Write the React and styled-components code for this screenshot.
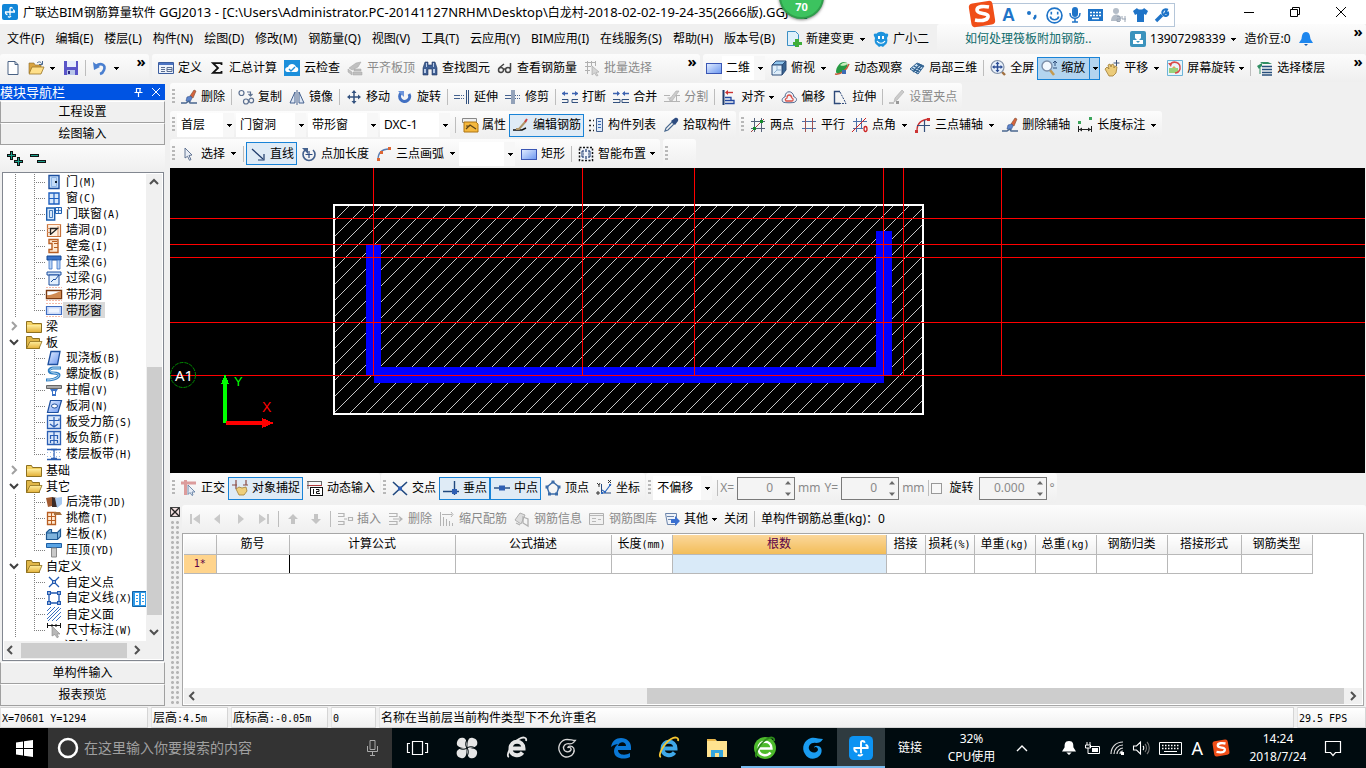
import React, { useState } from 'react';
import styled, { createGlobalStyle, css } from 'styled-components';

const ui = '"Noto Sans", "Noto Sans CJK SC", sans-serif';

const GlobalStyle = createGlobalStyle`
  * { box-sizing: border-box; }
  body { margin: 0; background: #f0f0f0; overflow: hidden; }
  body, button, input, select { font-family: ${ui}; font-size: 12px; line-height: 16px; color: #000; }
  button { background: none; border: 0; padding: 0; margin: 0; white-space: nowrap; }
  ul { list-style: none; margin: 0; padding: 0; }
`;

/* ---------- icons ---------- */

const navy = '#33517e';
const gray = '#b4b4b4';
const S = (d, stroke = navy, w = 1, more = {}) => <path d={d} fill="none" stroke={stroke} strokeWidth={w} {...more} />;
const F = (d, fill = navy, more = {}) => <path d={d} fill={fill} {...more} />;

const icons = {
  doc: <>{F('M3 1.500h7l3 3v10H3z', '#fff', { stroke: '#4a6284' })}{S('M10 1.500v3h3', '#4a6284')}</>,
  open: <>{F('M1 3h5l1 2h6v8H1z', '#d9a441', { stroke: '#8a6a28', strokeWidth: .6 })}{F('M4 7h12l-3 7H1z', '#ffe08a', { stroke: '#9a7526', strokeWidth: .8 })}{S('M9 3c2-2 4-1 5 1M14.500 1v3.500H11', '#49688f')}</>,
  save: <>{F('M1 1h14v14H1z', '#5a55c8')}{F('M4 1h9v6H4z', '#e8eefc')}{F('M4 10h8v5H4z', '#b9c6ea')}{F('M5 11h2v3H5z', '#2c2a80')}</>,
  undo: <>{S('M4 6c5-4 10-1 8 4-1 3-4 4-4 4', '#4a7fd0', 2.6)}{F('M1 2l1 8 6-3z', '#4a7fd0')}</>,
  define: <>{F('M.5 2.500h15v11H.5z', '#eef3fb', { stroke: '#3c5ea0' })}{F('M1 3h14v2H1z', '#4d74c2')}{S('M3 7.500h4M3 9.500h4M3 11.500h4M9 7.500h5v4H9zM9 9.500h5', '#5a6d90')}</>,
  sigma: <>{S('M12.500 5V3.200H4L9 8l-5 4.800h8.500V11', '#111', 1.8)}</>,
  cloud: <>{F('M0 0h16v16H0z', '#1c8fdb')}{F('M3 12c-3-1-2-5 1-5 1-4 7-4 8 0 3 0 3 5 0 5z', '#fff')}{S('M5 9l2 2 4-4', '#1c8fdb', 1.4)}</>,
  flush: <>{F('M2 8l7-5 5-1-3 5-6 3zM1 9l4 3v3l-4-3zM6 12h9v3H6zM7 9h7v2H7z', '#c0c0c0', { stroke: '#a5a5a5', strokeWidth: .5 })}</>,
  bino: <>{F('M3 2h3v3h4V2h3l2 6v7h-5V9H6v6H1V8z', '#3f5f93', { stroke: '#22385f', strokeWidth: .6 })}{F('M2 9h2v4H2zM11 9h2v4h-2zM4 3h1v4H4zM11 3h1v4h-1z', '#b8cbe8')}</>,
  glasses: <>{S('M1.500 10a2.500 2.500 0 1 0 5 0a2.500 2.500 0 1 0-5 0M8.500 10a2.500 2.500 0 1 0 5 0a2.500 2.500 0 1 0-5 0M6.500 9h2M2 8l5-4M13.500 9V3', '#444', 1.5)}</>,
  batch: <>{S('M1 2.500h11M1 6.500h6M1 10.500h5M3.500 1v13M7.500 1v5M11.500 1v5', '#b0b0b0')}{F('M8 6l7 6-3 .5 2 3-1.500.5-2-3L8 15z', '#d5d5d5', { stroke: '#aaa', strokeWidth: .7 })}</>,
  rect: <rect x=".5" y="3.500" width="15" height="10" fill="url(#blueSheet)" stroke="#3a56b4" />,
  cube: <>{F('M1 5l4-4h10l-4 4z', '#8fc4ec', { stroke: '#2c4d78' })}{F('M11 5l4-4v9l-4 5z', '#376391', { stroke: '#2c4d78' })}{F('M1 5h10v10H1z', '#dfeefa', { stroke: '#2c4d78' })}{S('M3 13l3-3V6M6 10h4', '#8fb2d2')}</>,
  orbit: <>{F('M2 12c0-5 4-10 8-10 5 0 4 5 1 8-3 4-8 5-9 2z', '#279a42')}{F('M6 5c3-3 6-3 7-2 1 2-4 4-7 2z', '#c8eebc')}{S('M1 14c5 1 12-4 14-10', '#c65a3a', 1.5)}{F('M8 10h4v4H8z', '#3c6cb4')}</>,
  local: <>{F('M1 9l7-6 7 3-6 8z', '#cfe3f5', { stroke: '#2f6190' })}{S('M3 8l7 4M5 6l7 4M8 4l6 3M4 12l7-8M7 13l6-8', '#2f6190', 1.3)}</>,
  zoomfull: <>{S('M12 12l3 3', '#a07040', 2.4)}<circle cx="7.500" cy="7" r="6.500" fill="#e9f2fc" stroke="#8492a8" strokeWidth="1.200" />{S('M7.500 3v8M3.500 7h8', '#2d4d94', 1.5)}{F('M7.500 1.500l2 2.500h-4zM7.500 12.500l2-2.500h-4zM2 7l2.500-2v4zM13 7l-2.500-2v4z', '#2d4d94')}</>,
  zoom: <>{S('M9 10l4 5', '#c49a50', 2.6)}<circle cx="6" cy="6" r="5" fill="#f2f8fe" stroke="#7c8fa9" strokeWidth="1.400" />{S('M14 1v5M12 3l2-2 2 2M12 8h4', '#31507c')}</>,
  pan: <>{F('M1 9l2-2 2 2-1-4 2-1 1 3 1-3 2 1 0 3 1-2 2 1-1 6-3 3H5z', '#ebcb7a', { stroke: '#a17c34', strokeWidth: .8 })}{S('M12.500 0v6M9.500 3h6', '#3c5277')}</>,
  rotscreen: <>{F('M.5.5h15v15H.5z', '#e8f4fb', { stroke: '#6db4d8' })}{F('M2 8h9v5H2z', '#9ad27b')}{F('M5 8l2-2 2 2z', '#e8a05a')}{S('M3 5c3-5 11-3 10 4-1 3-3 4-5 4', '#d94848', 1.5)}{F('M1 3l4 0-1 4z', '#d94848')}</>,
  floors: <>{F('M3 2h8l4 2H6z', '#2f8d62')}{S('M5 6.500h10M5 9.500h10M5 12.500h10M5 15h10', '#274f7c', 1.3)}{F('M0 6l5-3v3l-3 3z', '#2f8d62')}{S('M3 8v6', '#2f8d62')}</>,

  brush: <>{F('M9 7l4-6 2 1-3 7z', '#d5633c', { stroke: '#7c4a30', strokeWidth: .6 })}{F('M6 8l4-1 1 2-2 4-4-1z', '#5c84cc', { stroke: '#334f88', strokeWidth: .6 })}{S('M0 14h5l3-2 1 2h7', '#49678f', 1.4)}</>,
  copy: <>{S('M1 4a2.500 2.500 0 1 0 5 0a2.500 2.500 0 1 0-5 0M5.500 12.500a2.500 2.500 0 1 0 5 0a2.500 2.500 0 1 0-5 0M11 11.500a2.300 2.300 0 1 0 4.600 0a2.300 2.300 0 1 0-4.600 0M9 3h3.500v4M10.500 5l2 2 2-2', '#5b6f8f', 1.2)}</>,
  mirror: <>{F('M1 14l5-11v11z', '#dfe8f5', { stroke: '#44618e' })}{S('M8 1v15', '#44618e', 1)}{F('M15 14L10 3v11z', '#dfe8f5', { stroke: '#44618e' })}</>,
  move: <>{S('M8 3v10M3 8h10', navy, 1.5)}{F('M8 1l2.500 3h-5zM8 15l2.500-3h-5zM1 8l3-2.500v5zM15 8l-3-2.500v5z')}</>,
  rotate: <>{S('M4 4a5 5 0 1 0 8 1', '#4270c2', 3)}{F('M1 2h6v6z', '#6d95dc')}</>,
  extend: <>{S('M0 6.500h6M0 9.500h6', '#44618e')}{S('M7 6.500h4M7 9.500h4', '#44618e', 1, { strokeDasharray: '1 1' })}{S('M12.500 1v14M14.500 1v14', navy)}</>,
  trim: <>{S('M0 6.500h6M0 9.500h6', '#44618e')}{S('M10 6.500h6M10 9.500h6', '#44618e', 1, { strokeDasharray: '1 1' })}{S('M7 1v14M9 1v14', navy)}</>,
  brk: <>{S('M0 4.500h6M10 4.500h6', '#3d63b0', 1.3)}{F('M0 4.500L3 2v5zM16 4.500L13 2v5z', '#3d63b0')}{S('M0 10.500h6v3H0M16 10.500h-6v3h6', navy)}</>,
  merge: <>{S('M0 4.500h6M10 4.500h6', '#3d63b0', 1.3)}{F('M7 4.500L4 2v5zM9 4.500L12 2v5z', '#3d63b0')}{S('M0 10.500h7v3H0M16 10.500H9v3h7', navy)}</>,
  split: <>{S('M0 6.500h6M10 6.500h6M0 12.500h16M12.500 6v6M3.500 9h4', gray)}{F('M5 11l7-9 3 0-7 10z', '#ccc', { stroke: '#aaa', strokeWidth: .6 })}</>,
  align: <>{S('M2.500 1v15', '#203d6c', 2)}{F('M4 3.500l3-2.500v5z', '#c33')}{S('M6 3.500h6', '#c33', 1.4)}{S('M4 8.500h6v3H4M4 11.500h9v3H4', '#2348a0', 1.3)}</>,
  offset: <>{F('M2 13c-2-2 0-5 2-5 0-7 8-7 9 0 2 0 4 3 1 5-1 1-11 1-12 0z', '#f3f3f8', { stroke: '#50688e' })}{S('M5 12c-2-2 1-3 1-3 0-4 4-4 5 0 2 1 1 3 0 3z', '#d9534a', 1.3)}</>,
  stretch: <>{S('M8 14.500H2.500v-12H8', '#2e4a7a', 1.4)}{S('M8 3l6 11.500H8', '#2e4a7a', 1, { strokeDasharray: '2 1' })}</>,
  gripset: <>{S('M0 14h5', '#aaa', 1.4)}{F('M5 13l1-4 7-8 2 2-7 8z', '#ccc', { stroke: '#aaa', strokeWidth: .6 })}{F('M7 12h3v3H7z', '#999')}</>,

  props: <>{F('M.5 1.500h14v4H.5z', '#efefef', { stroke: '#888' })}{F('M2 5h12l2 2v8H2z', '#f5b83d', { stroke: '#ad7514' })}{S('M4 12l4-4 6 4M4 9h4', '#5c431a', 1.2)}</>,
  editbar: <>{S('M0 13h9l4-2', '#111', 1.4)}{S('M3 12h3l7-8', '#b0966a', 2)}{S('M12 5l2-3', '#c44', 2)}</>,
  complist: <>{F('M8.500 1.500h6v13h-6z', '#dce8f8', { stroke: '#44618e' })}{S('M10 4.500h3M10 7.500h3M10 10.500h3', '#3566b0')}{S('M1 3.500h2M1 8.500h2M1 13.500h2M5 3.500h1M5 8.500h1M5 13.500h1', '#222', 1.6)}</>,
  picker: <>{S('M2 14l1-3 6-6 2 2-6 6z', '#49698f', 1.2)}{F('M8 4l4-3c2-1 4 1 3 3l-3 4z', '#2e4c80')}</>,
  twopt: <>{S('M1 4.500h14M1 11.500h14M4.500 1v14M11.500 1v14', '#55617a')}{S('M1 15L14 2', '#a04040', 1)}{F('M10 3h3v3h-3zM3 10h3v3H3z', '#178a2c')}</>,
  parallel: <>{S('M1 4.500h14M1 11.500h14', '#4a6fa8')}{S('M4.500 1v14M11.500 1v14', '#a05050')}</>,
  angle: <>{S('M1 4.500h14M1 11.500h10M4.500 1v14M9.500 1v10', '#4a6fa8')}{S('M0 15L14 1', '#c22')}{S('M12 12a1.500 2.500 0 1 0 3 0a1.500 2.500 0 1 0-3 0', '#c22', 1.3)}</>,
  arcaxis: <>{S('M2 14c0-8 4-11 12-12', '#c33', 1.4)}{S('M2 8.500h13M9.500 3v12', '#35507c', 1.2)}{F('M0 13h3v3H0zM12 1h3v3h-3z', '#c33')}</>,
  dim: <>{F('M1 4h3v3H1zM12 0h3v3h-3z', '#3aa45a')}{S('M1.500 9v6M14.500 9v6M2 12.500h12', '#222')}{F('M2 12.500l3-2v4zM14 12.500l-3-2v4z', '#222')}</>,

  cursor: <>{F('M4 2l7 7-3 .5 2 4-1.500.8-2-4L4 12z', '#e8edf5', { stroke: '#55698a', strokeWidth: .9 })}</>,
  line: <>{S('M2 3l11 10', '#1d3a6a', 1.2)}{S('M14 8v6H8', '#1d3a6a', 1.2)}</>,
  ptlen: <>{S('M4 4a6 6 0 1 0 8 0', '#44618e', 1.6)}{S('M8 5v7M4.500 8.500h7', '#2c4a80', 1.2)}{F('M1 2h6v6z', '#44618e')}</>,
  arc3: <>{S('M2 14c0-7 4-11 11-11', '#5a7bb0', 1.3)}{F('M1 12h3v3H1zM4 5h3v3H4zM12 1h3v3h-3z', '#dd6633')}</>,
  smart: <><rect x="1.500" y="1.500" width="13" height="13" fill="#f2f5fa" stroke="#111" strokeWidth="1.500" strokeDasharray="2 1.500" />{S('M8 3v3M8 10v3M3 8h3M10 8h3M5 4v2h-2M11 4v2h2M5 12v-2h-2M11 12v-2h2', '#1b3a70', 1.2)}</>,

  ortho: <>{S('M0 3h15M4.500 0v15', '#dc9c9c', 3)}{F('M7 5l7 7-3 0 1 3-1 .5-2-3-2 2z', '#e6ecf5', { stroke: '#55759c', strokeWidth: .8 })}</>,
  snap: <>{S('M0 5h5M11 5h5M4 0v9M14 0v5', '#8a4a42', 1.2)}{F('M4 9l3-2 3 1 4-1 1 4-3 4H7z', '#efcf7c', { stroke: '#a17c34', strokeWidth: .8 })}</>,
  dyn: <>{S('M0 5.500h15', '#b23b3b')}{S('M1 1v8M14.500 1v4M0 1.500h15', '#666')}<rect x="3.500" y="7.500" width="12" height="8" fill="#fff" stroke="#111" />{S('M6.500 9v5M9 9.500h3v2H9.500v2H13', '#111')}</>,
  cross: <>{S('M1 2l14 13M15 2L1 15', '#20487e', 1.6)}{F('M6 6.500h4v4H6z', '#2f5fb4')}</>,
  perp: <>{S('M0 11.500h16M11.500 1v14', '#20487e', 1.4)}{F('M9 9h5v5H9z', '#2f5fb4')}</>,
  mid: <>{S('M0 8h16', '#20487e', 1.4)}{F('M5 5.500h6v5H5z', '#2f5fb4')}</>,
  vertex: <>{S('M8 2l6 5-2.500 7h-7L2 7z', '#3c6ca8', 1.4)}{F('M6.500.5h3v3h-3zM12.500 5.500h3v3h-3zM.5 5.500h3v3h-3zM3 12.500h3v3H3zM10 12.500h3v3h-3z', '#3c6ca8')}</>,
  coord: <>{S('M5.500 4v9H15', '#2a4d80')}{S('M6 10l3 2 6-8', '#2e69c0', 1.2)}{S('M1 3l2 2 1-2M3 5v2M12 0l3 3M15 0l-3 3M1 12h2v2H1z', '#333')}{F('M5 12h2v2H5zM13 4h2v2h-2zM8 11h2v2H8z', '#2e69c0')}</>,

  first: <>{F('M3 3h2v10H3zM13 3v10L6 8z', '#c9c9c9')}</>,
  prev: F('M10 3v10L4 8z', '#c9c9c9'),
  next: F('M5 3v10l6-5z', '#c9c9c9'),
  last: <>{F('M11 3h2v10h-2zM3 3v10l7-5z', '#c9c9c9')}</>,
  up: F('M8 3l5 5h-3v5H6V8H3z', '#c4c4c4'),
  down: F('M8 13l5-5h-3V3H6v5H3z', '#c4c4c4'),
  insert: <>{S('M1 2.500h6v3H1M1 10.500h6v3H1M7 8h3M11.500 6.500h4v3h-4z', gray, 1.2)}</>,
  del: <>{S('M1 2.500h8v3H1M1 10.500h8v3H1M5 8h9M11 5.500L14 8l-3 2.500', gray, 1.2)}</>,
  scale: <>{S('M3 3.500h10M1.500 1v14M4.500 6v9M7.500 8v7M10.500 10v5M13.500 12v3', gray, 1)}{S('M12 1l2 2.500L12 6', gray)}</>,
  info: <>{F('M1 9l5-7 5 2-4 9z', '#ddd', { stroke: '#b0b0b0' })}{S('M9 6l5 2v7l-5-3zM2 12l4 2', '#b0b0b0', 1.3)}</>,
  lib: <>{F('M.5 2.500h14v11H.5z', '#f1f1f1', { stroke: '#b0b0b0' })}{S('M1 4.500h13M3 7.500h4M3 10.500h4M9 8.500h3', '#b8b8b8')}</>,
  other: <>{F('M1.500 2.500h11v11h-9z', '#eef3fa', { stroke: '#6b84ab' })}{S('M3 5.500h7M4 8.500h5', '#6b84ab')}{F('M7 8h4V5l5 5-5 5v-3H7z', '#3a6fd0')}</>,

  door: <>{F('M3 1.500h10v13H3z', '#c4dcf8', { stroke: '#1d4f9e', strokeWidth: 1.4 })}{S('M5.500 3.500h5v9h-5z', '#8fb6e6')}{F('M9 7h2v2H9z', '#123')}</>,
  window: <>{F('M3 3h10v11H3z', '#d7e8fb', { stroke: '#1d5fc0', strokeWidth: 1.4 })}{S('M8 3v11M3 8.500h10', '#1d5fc0', 1.2)}</>,
  doorwin: <>{F('M.7 2h8v12h-8z', '#d7e8fb', { stroke: '#1d5fb0', strokeWidth: 1.4 })}{F('M9.500 1.500h6v6h-6z', '#e4f0fd', { stroke: '#1d5fb0' })}{S('M12.500 1.500v6M9.500 4.500h6M3.500 4.500h3v7h-3z', '#1d5fb0', .8)}</>,
  hole: <>{F('M1.500 2.500h13v12h-13z', '#fff1e2', { stroke: '#c4703a', strokeWidth: 1.2 })}{S('M1 6.500h3M1 10.500h3M12 4v10M1 2.500h14', '#d98c5a')}{S('M4.500 13V6.500h7L5 12', '#222', 1.3)}</>,
  niche: <>{F('M3 1.500h9v13H3v-3h3v-6H3z', '#ffe9d0', { stroke: '#b85e22', strokeWidth: 1.4 })}{S('M8 5.500h4M8 9.500h4M6 3.500h5', '#b85e22')}</>,
  linkbeam: <>{F('M1 2h14v4H1z', '#3b73c8', { stroke: '#174a94' })}{F('M3 6h3v9H3zM11 6h3v9h-3z', '#bcd5f5', { stroke: '#3b73c8', strokeWidth: .8 })}</>,
  lintel: <>{F('M1 2h14v3H1z', '#cfe2f9', { stroke: '#1d4f9e' })}{F('M3 5h10v10H3z', '#e3effc', { stroke: '#1d4f9e' })}{S('M5 12l3-3 1 1 4-5', '#1d4f9e')}</>,
  striphole: <>{S('M0 1.500h16M0 14.500h16', '#f3b9a8', 1, { strokeDasharray: '2 1' })}{F('M.5 4.500h15v8H.5z', '#fff', { stroke: '#7a3a12', strokeWidth: 1.4 })}{F('M1 9c6 0 8-2 14-4v7H1z', '#d08a52')}</>,
  stripwin: <>{S('M0 1.500h16M0 14.500h16', '#f3b9a8', 1, { strokeDasharray: '2 1' })}{F('M.5 4.500h15v8H.5z', '#cddcfa', { stroke: '#3f6cc0', strokeWidth: 1.2 })}{F('M3 6.500h10v4H3z', '#eef4ff')}</>,
  folder: <>{F('M.5 3.500h5l1 2h9v9H.5z', '#f3d060', { stroke: '#8d7020' })}{F('M1 7h14v7H1z', 'url(#gold)')}</>,
  folderopen: <>{F('M.5 2.500h5l1 2h7v10H.5z', '#e0b748', { stroke: '#8d7020' })}{F('M4 7.500h12l-3 7H.5z', 'url(#gold)', { stroke: '#8d7020', strokeWidth: .8 })}</>,
  slab: F('M5 1.500h9L11.500 14.500H2z', 'url(#blueSheet)', { stroke: '#1d4f9e', strokeWidth: 1.3 }),
  spiral: <>{S('M15 2H7C1 3 3 7 7 7s8 1 5 4-8 3-12 3', '#2f7fc4', 3)}{S('M14 2H7C2 3 4 6.500 8 7s6 2 4 4-8 3-11 3', '#bfe0f6', 1)}</>,
  cap: <>{F('M.5 3.500h15v3H.5z', '#a9a9a9', { stroke: '#666' })}{F('M4 7h8l-2 3v4H6v-4z', '#3b73c8')}{F('M7 9h2v3H7z', '#fff')}</>,
  slabhole: <>{F('M4.500 2.500h11L12 14.500H1.500z', 'url(#blueSheet)', { stroke: '#1d4f9e', strokeWidth: 1.2 })}<ellipse cx="8.500" cy="8" rx="3" ry="2" fill="#fff" stroke="#1d4f9e" /></>,
  force: <>{F('M1.500 1.500h13v13h-13z', '#dce9fb', { stroke: '#2b5fb4', strokeWidth: 1.3 })}{S('M3 6.500h10v-2M8 3v9M4 10l4 3 4-3', '#2b5fb4', 1.2)}</>,
  neg: <>{F('M1.500 1.500h13v13h-13z', '#dce9fb', { stroke: '#2b5fb4', strokeWidth: 1.3 })}{S('M8 2v12M4.500 9V5.500h7V9M4.500 13v-2.500h7V13', '#2b5fb4', 1.2)}</>,
  band: <>{S('M1 3.500h14M1 13.500h14', '#2b5fb4', 1.6)}{S('M8 3v10M5 3.500h6M5 12.500h6', '#2b5fb4', 1.3)}{S('M1 6.500h14M1 10.500h14', '#9dbbe6', 1, { strokeDasharray: '1 2' })}</>,
  later: <>{F('M0 4l6-1v9l-4 1z', '#a15a30')}{F('M6 3l5 1v9H6z', '#3a2a28')}{F('M9 4l7-1v7l-5 4z', '#a8c8ee')}</>,
  eave: <>{F('M1.500 2.500h8v12h-8z', '#ffe9d0', { stroke: '#b85e22', strokeWidth: 1.3 })}{S('M1.500 6.500h8M1.500 10.500h8M5.500 3v11', '#b85e22')}{F('M8 2h6l2 3H8z', '#a8713e')}</>,
  board: <>{F('M.5 6.500l3-3h2v3h6l3-3v7l-3 3H.5z', '#7fb3dc', { stroke: '#1f5a94', strokeWidth: 1.2 })}{S('M.5 7h11v6', '#1f5a94')}</>,
  coping: <>{F('M.5 1.500h15v4H.5z', '#58a3e4', { stroke: '#1d5fa4' })}{F('M5.500 6h5v9h-5z', '#c9c9c9', { stroke: '#8a8a8a' })}</>,
  cpoint: <>{S('M3 3l10 10M13 3L3 13', '#2058b0', 1.3)}{F('M6 6h4v4H6z', '#2058b0')}{F('M7.200 7.200h1.600v1.600H7.200z', '#fff')}</>,
  cline: <>{S('M3 3h10v10H3z', '#2058b0', 1.3)}{F('M1 1h4v4H1zM11 1h4v4h-4zM1 11h4v4H1zM11 11h4v4h-4z', '#2058b0')}{F('M2.300 2.300h1.400v1.400H2.300zM12.300 2.300h1.400v1.400h-1.400zM2.300 12.300h1.400v1.400H2.300zM12.300 12.300h1.400v1.400h-1.400z', '#fff')}</>,
  carea: S('M1 5l4-4M1 9l8-8M1 13l12-12M2 15L15 2M6 15l9-9M10 15l5-5', '#3a70c0', 1),
  dimtag: <>{S('M1 3.500h14M1.500 1v5M14.500 1v5M6 2v3M10 2v3', '#111')}{F('M6 4l8 8-3 0 1.500 3-1.500.8-2-3.300L6 14z', '#b8b8b8', { stroke: '#888', strokeWidth: .6 })}</>,
  pages: <>{F('M.5.5h15v15H.5z', '#2f9be8', { stroke: '#1464a8' })}{F('M3 2h4v12H3zM9 2h4v12H9z', '#fff')}{S('M4 4.500h2M4 7.500h2M4 10.500h2M10 4.500h2M10 7.500h2M10 10.500h2', '#2f9be8')}</>,

  newdoc: <>{F('M1.500.5h8l3 3v11h-11z', '#dff0fb', { stroke: '#3b8fc4' })}{F('M9 8h4v3h3v3h-3v2H9v-2H7v-3h2z', '#3fae3a')}</>,
  mascot: <>{F('M3 3c3-3 7-3 10 0 1-1 3 0 2 2l-1 2c1 3 0 6-2 7l-2 2-2-1-2 1-2-2c-2-1-3-4-2-7L1 5C0 3 2 2 3 3z', '#1d93dd')}{F('M5 5h2v3H5zM9 5h2v3H9z', '#fff')}{S('M4 10c2 3 6 3 8 0', '#fff', 1.2)}</>,
  user: <>{F('M2 0h12a2 2 0 0 1 2 2v12a2 2 0 0 1-2 2H2a2 2 0 0 1-2-2V2a2 2 0 0 1 2-2z', '#3b93bd')}{F('M5 3h6v4l-2 2h4v4H3V9h4L5 7z', '#fff')}{F('M6 10h4l-2 2z', '#3b93bd')}</>,
  bell: <>{F('M8 1c4 0 4 4 4.500 7l2.500 4H1l2.500-4C4 5 4 1 8 1z', '#1d86ee')}{F('M6 13h4l-2 2z', '#1d5fae')}</>,
};

const Svg = styled.svg`
  flex: none;
  display: block;
  overflow: visible;
`;

function Icon({ name, size = 16 }){
  return <Svg width={size} height={size} viewBox="0 0 16 16" aria-hidden="true">{ icons[name] }</Svg>
}

function Caret(){
  return <Svg width="5" height="3" viewBox="0 0 5 3" shapeRendering="crispEdges"><path d="M0 0h5L2.500 3z" /></Svg>
}

function Chevron({ dir, color = '#505050' }){
  let d = { up: 'M1 6l4-4 4 4', down: 'M1 3l4 4 4-4', left: 'M6 1L2 5l4 4', right: 'M3 1l4 4-4 4' }[dir];
  return <Svg width="10" height="10" viewBox="0 0 10 10"><path d={d} fill="none" stroke={color} strokeWidth="2" /></Svg>
}

/* latin runs get their own face and size beside the hanzi */
const Half = styled.span`
  font-family: "DejaVu Sans Mono", monospace;
  font-size: 10px;
`;

const Wide = styled.span`
  font-size: 13px;
`;

function Song({ children, latin: Latin = Half }){
  return children.split(/([\x20-\x7e]+)/).map((part, i) => i % 2 ? <Latin key={i}>{ part }</Latin> : part)
}

/* ---------- frame ---------- */

const Window = styled.div`
  display: flex;
  flex-direction: column;
  height: 100vh;
  background: #f0f0f0;
`;

const TitleBar = styled.header`
  display: flex;
  align-items: center;
  flex: none;
  height: 24px;
  padding: 0 2px;
  gap: 5px;
  background: #fff;
  position: relative;
  white-space: pre;
`;

const Caption = styled.h1`
  flex: 1;
  margin: 0;
  font-size: 12px;
  font-weight: 400;
  overflow: hidden;
`;

const WinButton = styled.button`
  width: 46px;
  height: 22px;
  display: flex;
  align-items: center;
  justify-content: center;
`;

const WinButtons = styled.div`
  display: flex;
`;

const Ball = styled.div`
  position: absolute;
  left: 779px;
  top: -26px;
  width: 45px;
  height: 45px;
  border-radius: 50%;
  border: 2px solid #2f9e4c;
  background: #3cc35f;
  box-shadow: 0 1px 3px rgba(0, 0, 0, .5);
  color: #fff;
  font-weight: 700;
  font-size: 11px;
  text-align: center;
  padding-top: 23px;
`;

const ImeBar = styled.div`
  position: absolute;
  z-index: 2;
  right: 191px;
  top: 3px;
  height: 24px;
  width: 200px;
  padding-left: 26px;
  display: flex;
  align-items: center;
  gap: 6px;
  background: #fff;
  border: 1px solid #b5c6d9;
`;

const ImeLogo = styled.div`
  position: absolute;
  left: -8px;
  top: -4px;
`;

const Strip = styled.div`
  display: flex;
  flex: none;
  align-items: stretch;
  height: ${props => props.$h || 28}px;
  gap: ${props => props.$gap || 3}px;
`;

const Group = styled.div`
  display: flex;
  align-items: center;
  flex: ${props => props.$grow ? '1' : 'none'};
  padding: 0 2px 0 ${props => props.$start || 2}px;
  border-radius: 3px;
  background: linear-gradient(#fcfcfc, #f4f4f4 60%, #efefef);
  ${props => props.$plain && css`background: none;`}
`;

const Grip = styled.span`
  flex: none;
  width: 3px;
  height: 16px;
  margin-right: 2px;
  background: repeating-linear-gradient(#b8b8b8 0 2px, transparent 2px 4px);
`;

const Sep = styled.span`
  flex: none;
  width: 1px;
  height: 16px;
  margin: 0 2px 0 3px;
  background: #bdbdbd;
`;

const Gap = styled.span`
  flex: ${props => props.$w ? 'none' : '1'};
  width: ${props => props.$w || 0}px;
`;

const ToolButton = styled.button`
  display: flex;
  flex: none;
  align-items: center;
  gap: 4px;
  height: 23px;
  padding: 0 2px 0 3px;
  border: 1px solid transparent;
  &:disabled { color: #8a8a8a; }
  ${props => props.$on && css`
    border-color: #1883d7;
    background: ${props.$on === 'deep' ? '#b3d4ef' : '#dfebf6'};
  `}
`;

const CaretBox = styled.span`
  display: flex;
  justify-content: center;
  align-items: center;
  width: ${props => props.$split ? 8 : 5}px;
  height: 100%;
  ${props => props.$line && css`
    border-left: 1px solid #1883d7;
    padding-left: 3px;
  `}
`;

function Tool({ icon, label, menu, split, on, off }){
  return (
    <ToolButton $on={on} disabled={off} aria-pressed={on ? true : undefined} aria-label={label || icon}>
      { icon ? <Icon name={icon} /> : null }
      { label }
      { menu || split ? <CaretBox $split={split} $line={on === 'deep'}><Caret /></CaretBox> : null }
    </ToolButton>
  )
}

const More = styled.button`
  align-self: flex-start;
  width: 12px;
  font-size: 15px;
  font-weight: 700;
  line-height: 14px;
`;

const ComboBox = styled.span`
  position: relative;
  flex: none;
  display: flex;
  height: 24px;
  width: ${props => props.$w}px;
  margin-right: 2px;
  background: linear-gradient(to left, #f7f7f7 11px, #fff 11px);
`;

const ComboArrow = styled.span`
  position: absolute;
  right: 2px;
  top: 11px;
  pointer-events: none;
`;

const Select = styled.select`
  appearance: none;
  width: 100%;
  border: 0;
  padding: 0 12px 0 4px;
  background: none;
  outline: none;
`;

function Combo({ value, w, label }){
  return (
    <ComboBox $w={w}>
      <Select aria-label={label} defaultValue={value}><option>{ value }</option></Select>
      <ComboArrow><Caret /></ComboArrow>
    </ComboBox>
  )
}

/* ---------- menu ---------- */

const Menu = styled.nav`
  display: flex;
  align-items: center;
  gap: 11px;
  padding-left: 7px;
`;

const HelpLink = styled.a`
  width: 188px;
  padding-left: 27px;
  align-self: center;
  color: #0d6b6b;
  text-decoration: none;
`;

let menus = ['文件(F)', '编辑(E)', '楼层(L)', '构件(N)', '绘图(D)', '修改(M)', '钢筋量(Q)', '视图(V)', '工具(T)', '云应用(Y)', 'BIM应用(I)', '在线服务(S)', '帮助(H)', '版本号(B)'];

/* ---------- side panel ---------- */

const Body = styled.div`
  display: flex;
  flex: 1;
  min-height: 0;
  gap: 5px;
`;

const Side = styled.aside`
  display: flex;
  flex-direction: column;
  flex: none;
  width: 165px;
  padding: 2px 0 1px;
`;

const SideHead = styled.div`
  display: flex;
  align-items: center;
  height: 16px;
  gap: 8px;
  margin-bottom: 1px;
  padding-right: 4px;
  background: #0054e3;
  color: #fff;
  font-size: 13px;
`;

const SideTab = styled.button`
  flex: none;
  height: 22px;
  border: 1px solid #a0a0a0;
  border-top-color: #fff;
  background: #f0f0f0;
`;

const SideTools = styled.div`
  display: flex;
  align-items: center;
  flex: none;
  height: 27px;
  gap: 6px;
  padding-left: 7px;
  background: linear-gradient(#fbfbfb, #efefef);
`;

const TreeFrame = styled.div`
  flex: 1;
  min-height: 0;
  display: grid;
  grid-template: minmax(0, 1fr) 18px / minmax(0, 1fr) 16px;
  margin: 0 1px 1px 2px;
  border: 1px solid #828790;
  padding: 1px;
  background: #fff;
`;

const Tree = styled.ul`
  overflow: hidden;
`;

const TreeRow = styled.li`
  display: flex;
  align-items: center;
  height: 16px;
  padding-left: ${props => props.$folder ? 5 : 11}px;
  white-space: nowrap;
`;

const Rail = styled.span`
  flex: none;
  align-self: stretch;
  width: ${props => props.$w}px;
  background:
    ${props => props.$arm ? 'repeating-linear-gradient(90deg, #808080 0 1px, transparent 1px 2px) 0 8px / 11px 1px no-repeat,' : ''}
    repeating-linear-gradient(#808080 0 1px, transparent 1px 2px) 0 0 / 1px ${props => props.$end ? '9px' : '100%'} no-repeat;
`;

const Twist = styled.button`
  flex: none;
  width: 17px;
`;

const TreeLabel = styled.span`
  display: flex;
  align-items: center;
  margin-left: 1px;
  padding: 1px 3px 0;
  height: 16px;
  ${props => props.$on && css`background: #d9d9d9;`}
`;

const VBar = styled.div`
  display: flex;
  flex-direction: column;
  align-items: center;
  padding: 4px 0;
  background: #f0f0f0;
  &::before { content: ''; order: 1; flex: 182; }
  &::after { content: ''; order: 3; flex: 12; }
  & > :last-child { order: 4; }
`;

const VThumb = styled.span`
  order: 2;
  flex: 252;
  width: 15px;
  background: #cdcdcd;
`;

const HBar = styled.div`
  grid-column: 1 / -1;
  display: flex;
  align-items: center;
  gap: 5px;
  padding: 0 20px 0 2px;
  background: #f0f0f0;
`;

const HThumb = styled.span`
  flex: 1;
  height: 15px;
  background: #cdcdcd;
`;

let tree = [
  ['door', '门(M)'], ['window', '窗(C)'], ['doorwin', '门联窗(A)'], ['hole', '墙洞(D)'], ['niche', '壁龛(I)'],
  ['linkbeam', '连梁(G)'], ['lintel', '过梁(G)'], ['striphole', '带形洞'], ['stripwin', '带形窗', 'last'],
  ['folder', '梁'], ['folderopen', '板'],
  ['slab', '现浇板(B)'], ['spiral', '螺旋板(B)'], ['cap', '柱帽(V)'], ['slabhole', '板洞(N)'],
  ['force', '板受力筋(S)'], ['neg', '板负筋(F)'], ['band', '楼层板带(H)', 'last'],
  ['folder', '基础'], ['folderopen', '其它'],
  ['later', '后浇带(JD)'], ['eave', '挑檐(T)'], ['board', '栏板(K)'], ['coping', '压顶(YD)', 'last'],
  ['folderopen', '自定义'],
  ['cpoint', '自定义点'], ['cline', '自定义线(X)'], ['carea', '自定义面'], ['dimtag', '尺寸标注(W)', 'last'],
  ['folder', 'CAD识别'],
];

function SidePanel(){
  let [picked, setPicked] = useState('带形窗');

  return (
    <Side>
      <SideHead>
        模块导航栏<Gap />
        <button aria-label="固定"><Svg width="9" height="10" viewBox="0 0 9 10">{S('M2.500 1v4M6 1v4M2 1.500h5M.5 5.500h8M4.500 6v4', '#fff', 1.2)}</Svg></button>
        <button aria-label="关闭面板"><Svg width="10" height="9" viewBox="0 0 10 9">{S('M1 0l8 8M9 0L1 8', '#fff')}</Svg></button>
      </SideHead>
      <SideTab>工程设置</SideTab>
      <SideTab>绘图输入</SideTab>
      <SideTools>
        <button aria-label="全部展开"><Svg width="16" height="15" viewBox="0 0 16 15">{S('M4.500 0v9M0 4.500h9M11.500 6v9M7 10.500h9', '#111', 3)}{S('M4.500 1v7M1 4.500h7M11.500 7v7M8 10.500h7', '#1ba08c')}</Svg></button>
        <button aria-label="全部折叠"><Svg width="17" height="12" viewBox="0 0 17 12">{S('M1 2.500h9M8 8.500h9', '#111', 3)}{S('M2 2.500h7M9 8.500h7', '#1ba08c')}</Svg></button>
      </SideTools>
      <TreeFrame>
        <Tree>
          {
            tree.map(([icon, label, last]) => icon.startsWith('folder')
              ? (
                <TreeRow key={label} $folder>
                  <Twist aria-label={label}><Chevron dir={icon === 'folder' ? 'right' : 'down'} color={icon === 'folder' ? '#a0a0a0' : '#404040'} /></Twist>
                  <Icon name={icon} />
                  <TreeLabel><span><Song>{ label }</Song></span></TreeLabel>
                </TreeRow>
              )
              : (
                <TreeRow key={label} onClick={()=>{ setPicked(label) }}>
                  <Rail $w={19} />
                  <Rail $w={12} $arm $end={last} />
                  <Icon name={icon} />
                  <TreeLabel $on={picked === label}>
                    <span><Song>{ label }</Song></span>
                    { icon === 'cline' ? <Icon name="pages" /> : null }
                  </TreeLabel>
                </TreeRow>
              )
            )
          }
        </Tree>
        <VBar><Chevron dir="up" /><VThumb /><Chevron dir="down" /></VBar>
        <HBar><Chevron dir="left" /><HThumb /><Chevron dir="right" /></HBar>
      </TreeFrame>
      <SideTab>单构件输入</SideTab>
      <SideTab>报表预览</SideTab>
    </Side>
  )
}

/* ---------- drawing ---------- */

const Main = styled.main`
  display: flex;
  flex-direction: column;
  flex: 1;
  min-width: 0;
  padding-top: 1px;
`;

const Stage = styled.div`
  flex: 1;
  min-height: 0;
  margin-right: 1px;
  background: #000;
`;

const Drawing = styled.svg`
  display: block;
  width: 100%;
  height: 100%;
  font-family: "Liberation Sans", sans-serif;
`;

let rows = [50, 76, 89, 154, 207];
let cols = [203, 412, 524, 713, 733, 831];

function Plan(){
  return (
    <Stage>
      <Drawing shapeRendering="crispEdges">
        <defs>
          <pattern id="hatch" width="16" height="16" patternUnits="userSpaceOnUse">
            <path d="M-1 10L10 -1M8 17L17 8" stroke="#c4c4c4" strokeWidth="1" />
          </pattern>
        </defs>
        <rect x="164" y="37" width="589" height="209" fill="url(#hatch)" stroke="#fff" strokeWidth="2" />
        <rect x="196" y="77" width="15" height="130" fill="#00f" />
        <rect x="706" y="63" width="16" height="145" fill="#00f" />
        <rect x="204" y="199" width="510" height="16" fill="#00f" />
        { rows.map(y => <rect key={y} x="0" y={y} width="100%" height="1" fill="#f00" />) }
        { cols.map(x => <rect key={x} x={x} y="0" width="1" height="207" fill="#f00" />) }
        <circle cx="13" cy="207" r="12.500" fill="none" stroke="#008a00" strokeDasharray="4 1" shapeRendering="auto" />
        <text x="5" y="213" fill="#fff" fontSize="15" fontFamily="Noto Sans, sans-serif">A1</text>
        <rect x="53" y="214" width="4" height="41" fill="#0f0" />
        <path d="M55 206l4 10h-8z" fill="#0f0" />
        <rect x="56" y="253" width="38" height="4" fill="#f00" />
        <path d="M92 250v10l12-5z" fill="#f00" />
        <text x="64" y="218" fill="#0f0" fontSize="13">Y</text>
        <text x="92" y="244" fill="#f00" fontSize="14">X</text>
      </Drawing>
    </Stage>
  )
}

/* ---------- snap bar ---------- */

const Field = styled.label`
  display: flex;
  align-items: center;
  flex: none;
  gap: 3px;
  color: #8a8a8a;
`;

const SpinBox = styled.span`
  display: flex;
  align-items: center;
  width: ${props => props.$w}px;
  height: 23px;
  border: 1px solid #7a7a7a;
  background: #f4f4f4;
  padding-right: 3px;
`;

const SpinInput = styled.input`
  flex: 1;
  min-width: 0;
  width: 0;
  border: 0;
  background: none;
  padding: 0 12px 0 0;
  text-align: right;
  color: #8a8a8a;
  outline: none;
`;

function Spin({ value, w }){
  return (
    <SpinBox $w={w}>
      <SpinInput defaultValue={value} />
      <Svg width="6" height="15" viewBox="0 0 6 15"><path d="M0 3.500L3 0l3 3.500zM0 11.500L3 15l3-3.500z" fill="#6a6a6a" /></Svg>
    </SpinBox>
  )
}

const Check = styled.input`
  appearance: none;
  width: 11px;
  height: 11px;
  margin: 0 8px 0 0;
  border: 1px solid #999;
  background: #f8f8f8;
`;

const CheckLabel = styled.label`
  display: flex;
  align-items: center;
  margin-right: 5px;
`;

/* ---------- bar list ---------- */

const Panel = styled.section`
  display: flex;
  flex: none;
  height: 204px;
  padding-top: 2px;
  gap: 2px;
`;

const HandleRail = styled.div`
  display: flex;
  flex-direction: column;
  gap: 3px;
  padding: 2px 0 3px;
`;

const Handle = styled.div`
  flex: 1;
  width: 10px;
  background: radial-gradient(#b5b5b5 1px, transparent 2px) 0 0 / 5px 5px;
`;

const CloseBox = styled.button`
  display: block;
  width: 10px;
  height: 10px;
  background: #f0dede;
  border: 1px solid #444;
`;

const PanelBody = styled.div`
  flex: 1;
  min-width: 0;
  display: flex;
  flex-direction: column;
`;

const Sheet = styled.div`
  flex: 1;
  min-height: 0;
  display: flex;
  flex-direction: column;
  justify-content: space-between;
  overflow: hidden;
  margin: 0 2px 1px 0;
  border: 1px solid #a7a7a7;
  padding: 1px;
  background: #fff;
`;

const Table = styled.table`
  width: 1128px;
  table-layout: fixed;
  border-collapse: collapse;
`;

const Th = styled.th`
  height: 19px;
  padding: 0;
  font-weight: 400;
  border: solid #b8b8b8;
  border-width: 0 1px 1px 0;
  background: linear-gradient(#fff, #f0f0f0);
  ${props => props.$on && css`background: linear-gradient(#fbd79b, #f2bd59); color: #5a0046;`}
`;

const Td = styled.td`
  height: 19px;
  padding: 0;
  border: solid #b8b8b8;
  border-width: 0 1px 1px 0;
  background: ${props => props.$on ? '#d9eaf8' : '#fff'};
  ${props => props.$edit && css`border-right-color: #000;`}
`;

const RowHead = styled(Th)`
  background: #ffd48c;
  color: #5a0046;
`;

const SheetScroll = styled.div`
  display: flex;
  align-items: center;
  height: 16px;
  padding: 0 4px;
  background: #f0f0f0;
  gap: 4px;
`;

const Track = styled.span`
  flex: 1;
  height: 16px;
  display: flex;
  justify-content: flex-end;
`;

const Thumb = styled.span`
  width: 61%;
  background: #cdcdcd;
`;

const Total = styled.span`
  padding-left: 4px;
  white-space: nowrap;
`;

let columns = [
  ['', 32], ['筋号', 73], ['计算公式', 166], ['公式描述', 156], ['长度(mm)', 61], ['根数', 214], ['搭接', 39],
  ['损耗(%)', 49], ['单重(kg)', 61], ['总重(kg)', 61], ['钢筋归类', 71], ['搭接形式', 74], ['钢筋类型', 71],
];

function BarList(){
  return (
    <Panel>
      <HandleRail>
        <CloseBox aria-label="关闭列表"><Svg width="8" height="8" viewBox="0 0 8 8">{S('M0 0l8 8M8 0L0 8', '#222', 1.4)}</Svg></CloseBox>
        <Handle />
      </HandleRail>
      <PanelBody>
        <Strip $h={28}>
          <Group $grow $start={1}>
            <Tool icon="first" off /><Tool icon="prev" off /><Tool icon="next" off /><Tool icon="last" off /><Sep />
            <Tool icon="up" off /><Tool icon="down" off /><Sep />
            <Tool icon="insert" label="插入" off />
            <Tool icon="del" label="删除" off />
            <Tool icon="scale" label="缩尺配筋" off />
            <Tool icon="info" label="钢筋信息" off />
            <Tool icon="lib" label="钢筋图库" off />
            <Tool icon="other" label="其他" menu />
            <Tool label="关闭" /><Sep />
            <Total>单构件钢筋总重(kg)：0</Total>
          </Group>
        </Strip>
        <Sheet>
          <Table>
            <colgroup>{ columns.map(([name, w]) => <col key={name} width={w} />) }</colgroup>
            <thead>
              <tr>{ columns.map(([name]) => <Th key={name} $on={name === '根数'}><Song>{ name }</Song></Th>) }</tr>
            </thead>
            <tbody>
              <tr>
                <RowHead scope="row"><Song>1*</Song></RowHead>
                { columns.slice(1).map(([name]) => <Td key={name} $on={name === '根数'} $edit={name === '筋号'} />) }
              </tr>
            </tbody>
          </Table>
          <SheetScroll>
            <Chevron dir="left" /><Track><Thumb /></Track><Chevron dir="right" />
          </SheetScroll>
        </Sheet>
      </PanelBody>
    </Panel>
  )
}

/* ---------- status + taskbar ---------- */

const StatusBar = styled.footer`
  display: flex;
  flex: none;
  height: 21px;
  gap: 3px;
`;

const Cell = styled.span`
  flex: ${props => props.$w ? 'none' : '1'};
  width: ${props => props.$w || 0}px;
  padding-left: 1px;
  border: 1px solid #d5d5d5;
  border-left-color: #e4e4e4;
  background: linear-gradient(#fff, #f0f0f0);
  line-height: 20px;
  white-space: pre;
  overflow: hidden;
`;

const TaskBar = styled.div`
  display: flex;
  flex: none;
  height: 40px;
  background: #000b0f;
  color: #fff;
`;

const Start = styled.button`
  width: 48px;
  display: flex;
  align-items: center;
  justify-content: center;
  background: #000;
`;

const Search = styled.label`
  display: flex;
  align-items: center;
  width: 344px;
  padding: 0 12px 0 9px;
  gap: 5px;
  background: #333;
`;

const SearchInput = styled.input`
  flex: 1;
  min-width: 0;
  border: 0;
  padding: 0;
  background: none;
  outline: none;
  font-size: 14px;
  line-height: 20px;
  &::placeholder { color: #a0a0a0; opacity: 1; }
`;

const Apps = styled.div`
  display: flex;
  margin-right: ${props => props.$end || 0}px;
`;

const TaskButton = styled.button`
  width: ${props => props.$w || 48}px;
  display: flex;
  align-items: center;
  justify-content: center;
  color: #fff;
  border-bottom: 2px solid ${props => props.$open ? '#76b9ed' : 'transparent'};
  border-top: 2px solid transparent;
  ${props => props.$on && css`background: #2f3b40; border-top-color: #2f3b40;`}
`;

const Tray = styled.div`
  display: flex;
  align-items: center;
  gap: 9px;
`;

const InputMode = styled.span`
  font-size: 18px;
  line-height: 20px;
`;

const Stacked = styled.div`
  width: ${props => props.$w}px;
  padding-top: 2px;
  text-align: center;
  line-height: 18px;
  white-space: pre;
`;

const logoMark = <>{S('M8 11.500V4.500c0-1.500 2-1.500 2.500 0M3 8h10M3.500 8c0 2 1 2.500 2 2.500M6 12.500c1 1 2.500.5 3-.5M12.500 8c0-1.500-.5-2-1.500-2', '#fff', 1.3)}</>;

function GLogo({ c, edge, size = 24 }){
  return (
    <Svg width={size} height={size} viewBox="0 0 24 24">
      {F('M22 3c-2 3-4 4-7 4-5-1-8 3-7 6 1 4 7 5 9 1 0-3-3-4-4-2 0-3 5-3 7 0 2 4-1 9-5 10-4 2-9 0-11-4C0 12 3 4 10 2c4-1 8 1 12 1z', c, { stroke: edge || 'none', strokeWidth: 1.6 })}
    </Svg>
  )
}

function ELogo({ c, ring, band }){
  return (
    <Svg width="24" height="24" viewBox="0 0 24 24">
      { ring ? <circle cx="12" cy="12" r="11" fill={ring} /> : null }
      {S('M6 12.500h12.500c0-9-13-9-13 0 0 8 9 8 12 4', c, ring ? 2.4 : 4)}
      { band ? S('M4 21C0 20 7 7 14 3c5-3 8-1 7 2', band, 1.8) : null }
    </Svg>
  )
}

function EdgeLogo(){
  return (
    <Svg width="22" height="22" viewBox="0 0 22 22">
      {F('M1 10C2 4 6 1 11 1c6 0 10 4 10 9v3H8c0 5 7 6 12 3v4c-6 3-16 2-16-6 0-3 2-6 5-7-3 0-6 1-8 3zM8 9h8c0-5-7-5-8 0z', '#0a78d6')}
    </Svg>
  )
}

function SLogo({ size }){
  return (
    <Svg width={size} height={size} viewBox="0 0 28 28">
      <rect x="2" y="2" width="24" height="24" rx="4" fill="#f04e18" transform="rotate(-9 14 14)" />
      {S('M21 7c-5-1-12-1-12 3 0 5 12 2 11 7-1 4-8 4-13 3', '#fff', 3.6)}
    </Svg>
  )
}

function Dock(){
  return (
    <TaskBar>
      <Start aria-label="开始"><Svg width="17" height="17" viewBox="0 0 17 17">{F('M0 2.500l7-1V8H0zM8 1.300L17 0v8H8zM0 9h7v6.500l-7-1zM8 9h9v8l-9-1.300z', '#fff')}</Svg></Start>
      <Search>
        <Svg width="22" height="22" viewBox="0 0 22 22"><circle cx="11" cy="11" r="9" fill="none" stroke="#fff" strokeWidth="2.500" /></Svg>
        <SearchInput placeholder="在这里输入你要搜索的内容" aria-label="搜索" />
        <Svg width="15" height="18" viewBox="0 0 15 18">{S('M5 1.500h5v9H5zM2.500 7v5.500h10V7M7.500 13v4M5 16.500h5', '#aaa')}</Svg>
      </Search>
      <Apps $end={5}>
        <TaskButton $w={50} aria-label="任务视图"><Svg width="21" height="16" viewBox="0 0 21 16">{S('M5.500 1.500h10v13h-10zM3 3.500H.5v9H3M18 3.500h2.500v9H18', '#fff', 1.2)}</Svg></TaskButton>
        <TaskButton $w={50} aria-label="四叶草"><Svg width="22" height="22" viewBox="0 0 22 22">
          {F('M10.500 11C3 11 0 9 1 5s4-5 7-4c3 2 3 6 2.500 10zM11.500 10.500C11 3 13 0 17 1s5 4 4 7c-2 3-6 3-9.500 2.500zM11.500 11c7.500 0 10.500 2 9.500 6s-4 5-7 4c-3-2-3-6-2.500-10zM10.500 11.500C11 19 9 22 5 21s-5-4-4-7c2-3 6-3 9.500-2.500z', '#e6e6e6')}
          {S('M11 11C9 8 9 5 12 2M11 11c3-2 6-2 9 1M11 11c2 3 2 6-1 9M11 11c-3 2-6 2-9-1', '#000b0f', 1)}
        </Svg></TaskButton>
        <TaskButton $w={50} aria-label="浏览器"><ELogo c="#e6e6e6" band="#e6e6e6" /></TaskButton>
        <TaskButton $w={50} aria-label="广联云"><GLogo c="none" edge="#d8d8d8" size={20} /></TaskButton>
      </Apps>
      <Apps>
        <TaskButton aria-label="Edge"><EdgeLogo /></TaskButton>
        <TaskButton aria-label="Internet Explorer"><ELogo c="#3fa8e8" band="#f4c531" /></TaskButton>
        <TaskButton aria-label="文件资源管理器"><Svg width="22" height="20" viewBox="0 0 22 20">{F('M1 1h8l2 2h10v16H1z', '#ffe28f')}{F('M1 1h8l1 2H1z', '#e9b64a')}{F('M5 19v-7h12v7h-4v-4H9v4z', '#35a6de')}</Svg></TaskButton>
        <TaskButton $open aria-label="360浏览器"><ELogo c="#fff" ring="#4dbb2c" band="#2c8a1a" /></TaskButton>
        <TaskButton $open aria-label="广联达G"><GLogo c="#1a9cf0" /></TaskButton>
        <TaskButton $open $on aria-label="GGJ2013"><Svg width="24" height="24" viewBox="0 0 16 16"><rect width="16" height="16" rx="3" fill="#0d93f2" />{logoMark}</Svg></TaskButton>
      </Apps>
      <Gap $w={13} />
      <Tray>链接</Tray>
      <Gap />
      <Stacked $w={58}>{'32%\nCPU使用'}</Stacked>
      <Gap $w={16} />
      <Tray>
        <Svg width="12" height="8" viewBox="0 0 12 8">{S('M1 7l5-5 5 5', '#fff', 1.4)}</Svg>
        <Gap $w={16} />
        <Svg width="14" height="14" viewBox="0 0 16 16">{F('M8 0c5 0 5 4 5 7l3 5H0l3-5c0-3 0-7 5-7zM5 13h6l-3 3z', '#fff')}</Svg>
        <Svg width="16" height="13" viewBox="0 0 16 13">{S('M4.500 4.500h10v7H6M2 0v3M5 0v3M.5 3h5v3h-5zM3 6v5.500h3', '#fff')}{F('M7 6h6v4H7z', '#fff')}</Svg>
        <Svg width="14" height="14" viewBox="0 0 14 14">{S('M1 13C1 6 6 1 13 1M4 13c0-5 4-9 9-9M7 13c0-3 3-6 6-6M10 13c0-2 1-3 3-3', '#ddd', 1.2)}{F('M11 11h3v3h-3z', '#fff')}</Svg>
        <Svg width="17" height="14" viewBox="0 0 17 14">{S('M.5 5h3l4-4v12l-4-4h-3zM10 5c1 1 1 3 0 4', '#fff', 1.1)}{S('M12 3c2 2 2 6 0 8M14 1c3 3 3 9 0 12', '#777', 1.1)}</Svg>
        <Svg width="23" height="13" viewBox="0 0 23 13">{S('M.5.5h22v12H.5z', '#fff')}{S('M3 3.500h17M3 6.500h17', '#fff', 1.4, { strokeDasharray: '1.500 1.500' })}{S('M5 9.500h13', '#fff')}</Svg>
        <InputMode>A</InputMode>
        <SLogo size={18} />
      </Tray>
      <Gap $w={14} />
      <Stacked $w={68}>{'14:24\n2018/7/24'}</Stacked>
      <Gap $w={13} />
      <Tray><Svg width="16" height="17" viewBox="0 0 16 17">{S('M.5 1.500h15v11h-5L8 15.500l-2.500-3h-5z', '#fff', 1.2)}</Svg></Tray>
      <Gap $w={25} />
    </TaskBar>
  )
}

export default function App(){
  return (
    <Window>
      <GlobalStyle />
      <TitleBar>
        <Svg width="16" height="16" viewBox="0 0 16 16">
          <defs>
            <linearGradient id="blueSheet" x1="0" y1="0" x2="1" y2="1"><stop offset="0" stopColor="#e4eeff" /><stop offset="1" stopColor="#6a96f0" /></linearGradient>
            <linearGradient id="gold" x1="0" y1="0" x2="0" y2="1"><stop offset="0" stopColor="#ffee9e" /><stop offset="1" stopColor="#e3b13a" /></linearGradient>
          </defs>
          <rect width="16" height="16" rx="2" fill="#1186d8" />
          { logoMark }
        </Svg>
        <Caption><Song latin={Wide}>{'广联达BIM钢筋算量软件 GGJ2013 - [C:\\Users\\Administrator.PC-20141127NRHM\\Desktop\\白龙村-2018-02-02-19-24-35(2666版).GGJ12]'}</Song></Caption>
        <Ball>70</Ball>
        <ImeBar>
          <ImeLogo><SLogo size={28} /></ImeLogo>
          <Svg width="15" height="16" viewBox="0 0 15 16"><text x="0" y="14" fontSize="18" fontWeight="700" fill="#1f74c8" fontFamily="Liberation Sans, sans-serif">A</text></Svg>
          <Svg width="17" height="16" viewBox="0 0 17 16"><circle cx="6" cy="6" r="2" fill="#1f74c8" />{S('M12 8c1 2 0 3-1.500 4', '#1f74c8', 2.4)}</Svg>
          <Svg width="17" height="17" viewBox="0 0 16 16"><circle cx="8" cy="8" r="7" fill="none" stroke="#1f74c8" strokeWidth="1.600" />{S('M5 4.500v2.500M11 4.500v2.500M4 9c1 4 7 4 8 0', '#1f74c8', 1.5)}</Svg>
          <Svg width="12" height="16" viewBox="0 0 12 16"><rect x="3" y="0" width="6" height="10" rx="3" fill="#1f74c8" />{S('M1 6c0 7 10 7 10 0M6 11v4M3 15h6', '#1f74c8', 1.5)}</Svg>
          <Svg width="17" height="12" viewBox="0 0 17 12">{F('M1 0h15v12H1z', '#1f74c8')}{S('M3 3.500h11M3 6.500h11', '#fff', 1.6, { strokeDasharray: '2 1' })}{S('M5 9.500h7', '#fff', 1.5)}</Svg>
          <Svg width="17" height="16" viewBox="0 0 17 16"><circle cx="6" cy="4" r="3" fill="#b4bdc8" />{F('M1 14c0-8 9-8 10-3v3z', '#b4bdc8')}{S('M7 9.500h3v2.500H7v2.500h3M12 9v3h4M15 9v6', '#9aa5b4')}</Svg>
          <Svg width="15" height="14" viewBox="0 0 15 14">{F('M4 0c1 2 6 2 7 0l4 3-2 4-2-1v8H4V6L2 7 0 3z', '#1f74c8')}</Svg>
          <Svg width="15" height="15" viewBox="0 0 15 15">{S('M2 13l6-6', '#1f74c8', 3.4)}{S('M13 1.500c-3-1-6 2-4 5s6 1 5-2l-3 1z', '#1f74c8', 2)}</Svg>
        </ImeBar>
        <WinButtons>
          <WinButton aria-label="最小化"><Svg width="10" height="10" viewBox="0 0 10 10">{S('M0 5.500h10', '#000')}</Svg></WinButton>
          <WinButton aria-label="还原"><Svg width="10" height="10" viewBox="0 0 10 10">{S('M.5 2.500h7v7h-7zM2.500 2V.5h7v7H8', '#000')}</Svg></WinButton>
          <WinButton aria-label="关闭窗口"><Svg width="10" height="10" viewBox="0 0 10 10">{S('M0 0l10 10M10 0L0 10', '#000')}</Svg></WinButton>
        </WinButtons>
      </TitleBar>

      <Strip $h={30}>
        <Menu>{ menus.map(m => <button key={m}>{ m }</button>) }</Menu>
        <Group $plain $start={4}>
          <Tool icon="newdoc" label="新建变更" split />
          <Tool icon="mascot" label="广小二" />
        </Group>
        <Group $grow $start={1}>
          <HelpLink href="#help">如何处理筏板附加钢筋..</HelpLink>
          <Tool icon="user" label="13907298339" split />
          <Tool label="造价豆:0" />
          <Tool icon="bell" />
          <Gap />
          <More aria-label="更多">»</More>
        </Group>
      </Strip>

      <Strip $h={28}>
        <Group $start={1}>
          <Tool icon="doc" />
          <Tool icon="open" split />
          <Tool icon="save" /><Sep />
          <Tool icon="undo" split />
          <Gap $w={12} />
          <More aria-label="更多">»</More>
        </Group>
        <Group>
          <Tool icon="define" label="定义" />
          <Tool icon="sigma" label="汇总计算" />
          <Tool icon="cloud" label="云检查" />
          <Tool icon="flush" label="平齐板顶" off />
          <Tool icon="bino" label="查找图元" />
          <Tool icon="glasses" label="查看钢筋量" />
          <Tool icon="batch" label="批量选择" off />
          <Gap $w={31} />
          <More aria-label="更多">»</More>
        </Group>
        <Group $grow $start={3}>
          <Icon name="rect" />
          <Combo value="二维" w={43} label="视图模式" />
          <Tool icon="cube" label="俯视" split />
          <Tool icon="orbit" label="动态观察" />
          <Tool icon="local" label="局部三维" /><Sep />
          <Tool icon="zoomfull" label="全屏" />
          <Tool icon="zoom" label="缩放" split on="deep" />
          <Tool icon="pan" label="平移" split />
          <Tool icon="rotscreen" label="屏幕旋转" menu /><Sep />
          <Tool icon="floors" label="选择楼层" />
          <Gap />
          <More aria-label="更多">»</More>
        </Group>
      </Strip>

      <Body>
        <SidePanel />
        <Main>
          <Strip $h={28}>
            <Group>
              <Grip />
              <Tool icon="brush" label="删除" /><Sep />
              <Tool icon="copy" label="复制" />
              <Tool icon="mirror" label="镜像" /><Sep />
              <Tool icon="move" label="移动" />
              <Tool icon="rotate" label="旋转" /><Sep />
              <Tool icon="extend" label="延伸" />
              <Tool icon="trim" label="修剪" /><Sep />
              <Tool icon="brk" label="打断" />
              <Tool icon="merge" label="合并" />
              <Tool icon="split" label="分割" off /><Sep />
              <Tool icon="align" label="对齐" menu />
              <Tool icon="offset" label="偏移" />
              <Tool icon="stretch" label="拉伸" /><Sep />
              <Tool icon="gripset" label="设置夹点" off />
            </Group>
          </Strip>
          <Strip $h={28}>
            <Group>
              <Grip />
              <Combo value="首层" w={57} label="楼层" />
              <Combo value="门窗洞" w={70} label="构件类型" />
              <Combo value="带形窗" w={70} label="构件" />
              <Combo value="DXC-1" w={70} label="构件名称" /><Sep />
              <Tool icon="props" label="属性" />
              <Tool icon="editbar" label="编辑钢筋" on="light" />
              <Tool icon="complist" label="构件列表" />
              <Tool icon="picker" label="拾取构件" />
            </Group>
            <Group>
              <Grip />
              <Tool icon="twopt" label="两点" />
              <Tool icon="parallel" label="平行" />
              <Tool icon="angle" label="点角" split />
              <Tool icon="arcaxis" label="三点辅轴" split />
              <Tool icon="brush" label="删除辅轴" />
              <Tool icon="dim" label="长度标注" split />
            </Group>
          </Strip>
          <Strip $h={29}>
            <Group>
              <Grip />
              <Tool icon="cursor" label="选择" split /><Sep />
              <Tool icon="line" label="直线" on="light" />
              <Tool icon="ptlen" label="点加长度" />
              <Tool icon="arc3" label="三点画弧" split />
              <Combo value="" w={56} label="半径" />
              <Tool icon="rect" label="矩形" /><Sep />
              <Tool icon="smart" label="智能布置" menu />
            </Group>
            <Group><Grip /><Gap $w={24} /></Group>
          </Strip>

          <Plan />

          <Strip $h={30} $gap={1}>
            <Group>
              <Grip />
              <Tool icon="ortho" label="正交" />
              <Tool icon="snap" label="对象捕捉" on="light" />
              <Tool icon="dyn" label="动态输入" />
            </Group>
            <Group>
              <Grip />
              <Tool icon="cross" label="交点" />
              <Tool icon="perp" label="垂点" on="light" />
              <Tool icon="mid" label="中点" on="light" />
              <Tool icon="vertex" label="顶点" />
              <Tool icon="coord" label="坐标" />
            </Group>
            <Group>
              <Grip />
              <Combo value="不偏移" w={59} label="偏移方式" /><Sep />
              <Field>X=<Spin value="0" w={58} />mm</Field>
              <Gap $w={4} />
              <Field>Y=<Spin value="0" w={58} />mm</Field><Sep />
              <CheckLabel><Check type="checkbox" />旋转</CheckLabel>
              <Field aria-label="角度"><Spin value="0.000" w={68} />°</Field>
            </Group>
          </Strip>
          <BarList />
        </Main>
      </Body>

      <StatusBar>
        <Cell $w={148}><Song>X=70601 Y=1294</Song></Cell>
        <Cell $w={77}><Song>层高:4.5m</Song></Cell>
        <Cell $w={97}><Song>底标高:-0.05m</Song></Cell>
        <Cell $w={45}><Song>0</Song></Cell>
        <Cell><Song>名称在当前层当前构件类型下不允许重名</Song></Cell>
        <Cell $w={69}><Song>29.5 FPS</Song></Cell>
      </StatusBar>
      <Dock />
    </Window>
  )
}
